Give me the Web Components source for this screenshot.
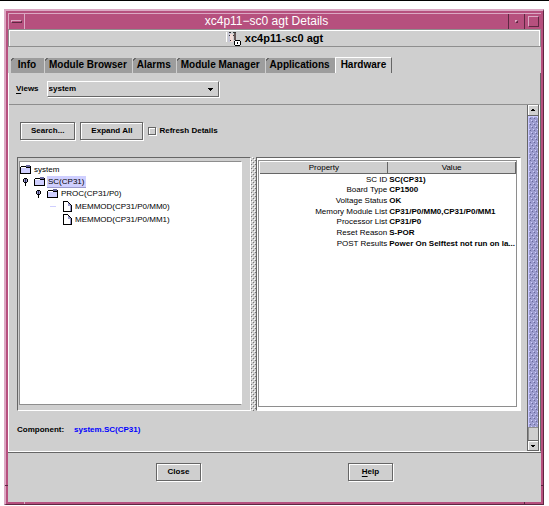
<!DOCTYPE html>
<html lang="en">
<head>
<meta charset="utf-8">
<title>xc4p11-sc0 agt Details</title>
<style>
  * { box-sizing: border-box; }
  html, body { height: 100%; }
  body {
    margin: 0;
    padding: 8px 5px 1px 4px;
    border-top: 1px solid #000;
    background: #fff;
    font: bold 8px/12px "Liberation Sans", Arial, sans-serif;
    color: #000;
    --face: #cfcfcf;
    --shade: #666;
    --mid: #8e8e8e;
    --select: #cfcfff;
  }
  .views {
    display: flex;
    align-items: center;
    gap: 8px;
    padding: 8px 7px 7px;
  }
  .tools {
    display: flex;
    align-items: center;
    gap: 5px;
    padding: 17px 11px;
  }
  .component {
    display: flex;
    gap: 10px;
    padding: 13px 8px 15px;
  }
  .component a { color: #00f; text-decoration: none; }
  u { text-underline-offset: 2px; }
</style>
</head>
<body>
<frame-window>
  <span slot="title">xc4p11−sc0 agt Details</span>
  <agent-banner>xc4p11-sc0 agt</agent-banner>
  <tab-bar>
    <tab-item>Info</tab-item>
    <tab-item>Module Browser</tab-item>
    <tab-item>Alarms</tab-item>
    <tab-item>Module Manager</tab-item>
    <tab-item>Applications</tab-item>
    <tab-item active>Hardware</tab-item>
  </tab-bar>
  <tab-page>
    <view-select slot="top" class="views" value="system"><u>V</u>iews</view-select>
    <div class="tools">
      <push-button>Search...</push-button>
      <push-button>Expand All</push-button>
      <check-field>Refresh Details</check-field>
    </div>
    <split-pane>
      <component-tree slot="left">
        <tree-node icon="folder" level="0">system</tree-node>
        <tree-node icon="folder" level="1" handle selected>SC(CP31)</tree-node>
        <tree-node icon="folder" level="2" handle>PROC(CP31/P0)</tree-node>
        <tree-node icon="file" level="3" dash>MEMMOD(CP31/P0/MM0)</tree-node>
        <tree-node icon="file" level="3">MEMMOD(CP31/P0/MM1)</tree-node>
      </component-tree>
      <property-table slot="right"></property-table>
    </split-pane>
    <div class="component"><span>Component:</span><a href="#">system.SC(CP31)</a></div>
  </tab-page>
  <push-button slot="footer">Close</push-button>
  <push-button slot="footer"><u>H</u>elp</push-button>
</frame-window>

<script>
const base = '<style>* { box-sizing: border-box; } :host([hidden]) { display: none; }</style>';

class FrameWindow extends HTMLElement {
  constructor() {
    super();
    this.attachShadow({mode: 'open'}).innerHTML = `${base}
      <style>
        :host {
          display: flex;
          flex-direction: column;
          position: relative;
          box-sizing: border-box;
          min-height: 100%;
          padding: 2px;
          background: #b6507e;
          border: 2px solid #dba9c4;
          border-right: 1px solid #5e2842;
          border-bottom: 1px solid #5e2842;
        }
        header {
          display: grid;
          grid-template-columns: 16px 1fr 16px 17px;
          height: 16px;
          border-top: 1px solid #dba9c4;
          border-left: 1px solid #dba9c4;
          color: #fff;
          font-weight: normal;
          font-size: 12px;
          line-height: 15px;
          text-align: center;
        }
        button {
          display: grid;
          place-items: center;
          padding: 0;
          border: 0;
          background: none;
          border-left: 1px solid #5e2842;
        }
        .menu { border-left: 0; border-right: 1px solid #dba9c4; }
        i { display: block; border: 1px solid #dba9c4; border-right-color: #5e2842; border-bottom-color: #5e2842; }
        .menu i { width: 11px; height: 3px; }
        .min i { width: 3px; height: 3px; }
        .max i { width: 11px; height: 11px; }
        main {
          flex: 1;
          display: flex;
          flex-direction: column;
          background: var(--face);
        }
        footer {
          display: flex;
          justify-content: center;
          gap: 147px;
          padding: 10px 0 21px;
          border-top: 1px solid var(--shade);
        }
        footer ::slotted(*) { min-width: 45px; }
        b { position: absolute; background: #5e2842; }
        .l { left: -1px; bottom: 18px; width: 3px; height: 1px; }
        .r { right: 0; bottom: 18px; width: 2px; height: 1px; }
        .d { right: 18px; bottom: 0; width: 1px; height: 2px; }
        .e { left: 18px; bottom: 0; width: 1px; height: 2px; background: #dba9c4; }
      </style>
      <header>
        <button class="menu" aria-label="Window menu"><i></i></button>
        <slot name="title"></slot>
        <button class="min" aria-label="Minimize"><i></i></button>
        <button class="max" aria-label="Maximize"><i></i></button>
      </header>
      <main>
        <slot></slot>
        <footer><slot name="footer"></slot></footer>
      </main>
      <b class="l"></b><b class="r"></b><b class="d"></b><b class="e"></b>
    `;
  }
}
customElements.define('frame-window', FrameWindow);

class AgentBanner extends HTMLElement {
  constructor() {
    super();
    this.attachShadow({mode: 'open'}).innerHTML = `${base}
      <style>
        :host {
          display: flex;
          justify-content: center;
          align-items: center;
          gap: 4px;
          box-sizing: border-box;
          height: 18px;
          border: 1px solid var(--mid);
          box-shadow: inset 1px 1px #fff, inset -1px 0 #fff;
          font-size: 11px;
        }
      </style>
      <svg width="15" height="15" viewBox="0 0 15 15" shape-rendering="crispEdges">
        <path fill="#fff" d="M0 1h1v10H0z"/>
        <path fill="#c8c8d8" d="M2 1h3v10H2z"/>
        <path fill="#f4dcd8" d="M4 3h3v8H4z"/>
        <path fill="#333" d="M3 1h2v1H3zM3 4h1v1H3zM7 1h3v1H7zM7 4h1v1H7zM4 9h1v1H4z"/>
        <path fill="#655" d="M8 2h2v7H8z"/>
        <path fill="#000" d="M9 9h5v1H9zM8 10h1v4H8zM14 10h1v4h-1zM9 14h5v1H9z"/>
        <path fill="#fff" d="M9 10h5v4H9z"/>
        <path fill="#000" d="M11 11h1v2h-1z"/>
      </svg>
      <slot></slot>
    `;
  }
}
customElements.define('agent-banner', AgentBanner);

class TabBar extends HTMLElement {
  constructor() {
    super();
    this.attachShadow({mode: 'open'}).innerHTML = `${base}
      <style>
        :host { display: flex; align-items: flex-end; padding: 10px 2px 0; }
      </style>
      <slot></slot>
    `;
  }
}
customElements.define('tab-bar', TabBar);

class TabItem extends HTMLElement {
  constructor() {
    super();
    this.attachShadow({mode: 'open'}).innerHTML = `${base}
      <style>
        :host { display: block; }
        button {
          display: block;
          min-width: 34px;
          height: 15px;
          padding: 0 5px 2px;
          border: 0;
          background: linear-gradient(135deg, var(--face) 2px, var(--shade) 2px, var(--shade) 3px, #9d9d9d 3px);
          box-shadow: inset 1px 0 var(--face);
          font: inherit;
          font-size: 10px;
          line-height: 13px;
          color: inherit;
          white-space: nowrap;
        }
        :host([active]) button {
          height: 16px;
          background: var(--face);
          box-shadow: none;
          border-top: 1px solid #fff;
          border-left: 1px solid #fff;
          border-right: 1px solid var(--shade);
        }
      </style>
      <button><slot></slot></button>
    `;
  }
}
customElements.define('tab-item', TabItem);

class TabPage extends HTMLElement {
  constructor() {
    super();
    this.attachShadow({mode: 'open'}).innerHTML = `${base}
      <style>
        :host {
          flex: 1;
          display: flex;
          flex-direction: column;
          border-left: 1px solid #fff;
          border-right: 1px solid var(--shade);
          border-bottom: 1px solid #fff;
        }
        .scroll {
          flex: 1;
          display: flex;
          border-top: 1px solid var(--mid);
          border-right: 1px solid #fff;
        }
        .body { flex: 1; display: flex; flex-direction: column; min-width: 0; }
      </style>
      <slot name="top"></slot>
      <div class="scroll">
        <div class="body"><slot></slot></div>
        <scroll-track></scroll-track>
      </div>
    `;
  }
}
customElements.define('tab-page', TabPage);

class ScrollTrack extends HTMLElement {
  constructor() {
    super();
    this.attachShadow({mode: 'open'}).innerHTML = `${base}
      <style>
        :host {
          display: flex;
          flex-direction: column;
          width: 12px;
          border-left: 1px solid var(--shade);
          border-right: 1px solid var(--shade);
        }
        button {
          display: grid;
          place-items: center;
          height: 11px;
          padding: 0;
          border: 0;
          background: var(--face);
          box-shadow: inset 1px 1px #fff;
          border-bottom: 1px solid var(--shade);
        }
        button:last-child { border-top: 1px solid var(--shade); }
        .thumb {
          flex: 1;
          border-left: 1px solid #c9c9ff;
          border-top: 1px solid #c9c9ff;
        }
        .thumb svg { display: block; width: 100%; height: 100%; }
        .gap { height: 13px; border-top: 1px solid var(--mid); border-left: 1px solid var(--mid); }
      </style>
      <button aria-label="Scroll up"><svg width="4" height="2" shape-rendering="crispEdges"><path d="M1 0h2v1h1v1H0V1h1z"/></svg></button>
      <div class="thumb">
        <svg>
          <defs>
            <pattern id="dots" width="4" height="6" patternUnits="userSpaceOnUse">
              <path fill="#9c9cce" d="M0 0h4v6H0z"/>
              <path fill="#cfcfff" d="M0 0h1v1H0zM2 3h1v1H2z"/>
              <path fill="#66669c" d="M1 1h1v1H1zM3 4h1v1H3z"/>
            </pattern>
          </defs>
          <rect width="100%" height="100%" fill="url(#dots)" shape-rendering="crispEdges"/>
        </svg>
      </div>
      <div class="gap"></div>
      <button aria-label="Scroll down"><svg width="4" height="2" shape-rendering="crispEdges"><path d="M0 0h4v1H3v1H1V1H0z"/></svg></button>
    `;
  }
}
customElements.define('scroll-track', ScrollTrack);

class ViewSelect extends HTMLElement {
  constructor() {
    super();
    this.attachShadow({mode: 'open'}).innerHTML = `${base}
      <style>
        label { display: contents; }
        .box {
          display: grid;
          grid-template-columns: 1fr 10px;
          align-items: center;
          width: 172px;
          height: 16px;
          border: 1px solid #fff;
          border-right-color: var(--shade);
          border-bottom-color: var(--shade);
          box-shadow: 1px 1px #fff;
        }
        select {
          grid-area: 1 / 1 / 2 / 3;
          appearance: none;
          height: 14px;
          padding: 0 1px;
          border: 0;
          background: none;
          font: inherit;
          color: inherit;
        }
        svg { grid-area: 1 / 2; pointer-events: none; }
      </style>
      <label for="view"><span><slot></slot></span></label>
      <div class="box">
        <select id="view"><option>${this.getAttribute('value')}</option></select>
        <svg width="5" height="3" shape-rendering="crispEdges"><path d="M0 0h5v1H4v1H3v1H2V2H1V1H0z"/></svg>
      </div>
    `;
  }
}
customElements.define('view-select', ViewSelect);

class PushButton extends HTMLElement {
  constructor() {
    super();
    this.attachShadow({mode: 'open'}).innerHTML = `${base}
      <style>
        :host { display: block; }
        button {
          display: block;
          width: 100%;
          height: 18px;
          padding: 0 10px;
          border: 1px solid var(--shade);
          background: var(--face);
          box-shadow: inset 1px 1px #fff, 1px 1px #fff;
          font: inherit;
          color: inherit;
        }
      </style>
      <button><slot></slot></button>
    `;
  }
}
customElements.define('push-button', PushButton);

class CheckField extends HTMLElement {
  constructor() {
    super();
    this.attachShadow({mode: 'open'}).innerHTML = `${base}
      <style>
        :host { display: block; }
        label { display: flex; align-items: center; gap: 3px; }
        input {
          appearance: none;
          width: 8px;
          height: 8px;
          margin: 0;
          border: 1px solid var(--shade);
          box-shadow: inset 1px 1px #fff, 1px 1px #fff;
        }
      </style>
      <label><input type="checkbox"><span><slot></slot></span></label>
    `;
  }
}
customElements.define('check-field', CheckField);

class SplitPane extends HTMLElement {
  constructor() {
    super();
    this.attachShadow({mode: 'open'}).innerHTML = `${base}
      <style>
        :host {
          flex: 1;
          display: grid;
          grid-template-columns: 234fr 5px 264fr;
          padding: 0 6px 0 8px;
        }
        .side {
          display: grid;
          min-width: 0;
          border: 1px solid var(--shade);
          border-right-color: #fff;
          border-bottom-color: #fff;
        }
        .left { padding: 3px 8px 5px 1px; }
        .right { padding: 2px 3px 3px 1px; background: #fff; }
        .divider svg { display: block; width: 100%; height: 100%; }
      </style>
      <div class="side left"><slot name="left"></slot></div>
      <div class="divider">
        <svg>
          <defs>
            <pattern id="grip" width="4" height="4" patternUnits="userSpaceOnUse">
              <path fill="#fff" d="M1 0h1v1H1zM3 2h1v1H3z"/>
              <path fill="#777" d="M2 1h1v1H2zM0 3h1v1H0z"/>
            </pattern>
          </defs>
          <rect width="100%" height="100%" fill="url(#grip)" shape-rendering="crispEdges"/>
        </svg>
      </div>
      <div class="side right"><slot name="right"></slot></div>
    `;
  }
}
customElements.define('split-pane', SplitPane);

class ComponentTree extends HTMLElement {
  constructor() {
    super();
    this.attachShadow({mode: 'open'}).innerHTML = `${base}
      <style>
        :host {
          display: block;
          background: #fff;
          border: 1px solid var(--mid);
          border-right-color: #fff;
          padding-top: 1px;
          font-weight: normal;
        }
      </style>
      <slot></slot>
    `;
  }
}
customElements.define('component-tree', ComponentTree);

const icons = {
  folder: `<svg width="12" height="9" viewBox="0 0 12 9" shape-rendering="crispEdges">
    <path fill="#cfcfff" d="M1 2h9v6H1z"/>
    <path fill="#fff" d="M1 2h9v1H1z"/>
    <path fill="#66669c" d="M6 0h4v2H6z"/>
    <path fill="#000" d="M0 2h1v6H0zM1 1h5v1H1zM6 2h4v1H6zM10 1h1v7h-1zM0 8h11v1H0z"/></svg>`,
  file: `<svg width="9" height="11" viewBox="0 0 9 11" shape-rendering="crispEdges">
    <path fill="#fff" d="M1 1h4l3 3v6H1z"/>
    <path fill="#9c9cce" d="M5 2h1v1h1v1h1v1H5zM7 5h1v5H7z"/>
    <path fill="#000" d="M0 0h5v1H0zM0 0h1v11H0zM0 10h9v1H0zM8 4h1v7H8zM5 1h1v1H5zM6 2h1v1H6zM7 3h1v1H7z"/></svg>`
};

class TreeNode extends HTMLElement {
  constructor() {
    super();
    const level = Number(this.getAttribute('level'));
    let lead = '';
    if (this.hasAttribute('handle')) {
      lead = `<svg width="6" height="9" viewBox="0 0 6 9" shape-rendering="crispEdges">
        <path fill="#000" d="M1 1h3v1H1zM0 2h1v3H0zM4 2h1v3H4zM1 5h3v1H1zM2 6h1v3H2z"/>
        <path fill="#9c9cce" d="M1 2h3v3H1z"/><path fill="#336" d="M2 2h1v3H2z"/></svg>`;
    }
    if (this.hasAttribute('dash')) {
      lead = '<svg width="6" height="1"><path fill="#cfcfff" d="M0 0h6v1H0z"/></svg>';
    }
    this.attachShadow({mode: 'open'}).innerHTML = `${base}
      <style>
        :host { display: flex; align-items: center; height: ${level > 1 ? 13 : 12}px; }
        .lead { display: flex; justify-content: flex-end; width: ${level * 14 - (level > 1 ? 1 : 0)}px; padding-right: 5px; }
        .lead:empty { padding-right: 0; }
        .icon { display: flex; justify-content: center; width: 12px; margin-right: 1px; }
        .text { padding: 0 1px; line-height: 11px; white-space: nowrap; }
        :host([selected]) .text { background: var(--select); box-shadow: 0 1px #9c9cce; padding-right: 2px; }
      </style>
      <span class="lead">${lead}</span>
      <span class="icon">${icons[this.getAttribute('icon')]}</span>
      <span class="text"><slot></slot></span>
    `;
  }
}
customElements.define('tree-node', TreeNode);

class PropertyTable extends HTMLElement {
  constructor() {
    super();
    this.rows = [
      ['SC ID', 'SC(CP31)'],
      ['Board Type', 'CP1500'],
      ['Voltage Status', 'OK'],
      ['Memory Module List', 'CP31/P0/MM0,CP31/P0/MM1'],
      ['Processor List', 'CP31/P0'],
      ['Reset Reason', 'S-POR'],
      ['POST Results', 'Power On Selftest not run on la...']
    ];
    this.attachShadow({mode: 'open'}).innerHTML = `${base}
      <style>
        :host {
          display: block;
          background: #fff;
          border: 1px solid var(--mid);
          padding: 1px 0 0 1px;
        }
        table { width: 100%; table-layout: fixed; border-collapse: separate; border-spacing: 0; }
        th {
          height: 12px;
          padding: 0;
          background: var(--face);
          border-right: 1px solid var(--shade);
          border-bottom: 1px solid var(--shade);
          font-weight: normal;
          line-height: 11px;
        }
        td { padding: 0 1px; line-height: 11px; white-space: nowrap; }
        tr:nth-child(3n + 2) td { line-height: 10px; }
        td:first-child { text-align: right; font-weight: normal; }
      </style>
      <table>
        <thead><tr><th>Property</th><th>Value</th></tr></thead>
        <tbody>${this.rows.map(([name, value]) => `<tr><td>${name}</td><td>${value}</td></tr>`).join('')}</tbody>
      </table>
    `;
  }
}
customElements.define('property-table', PropertyTable);
</script>
</body>
</html>
